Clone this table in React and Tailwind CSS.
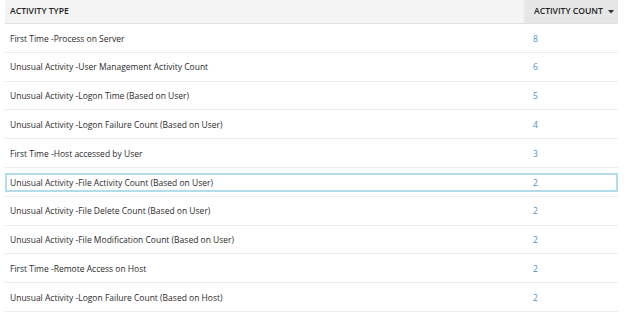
import React from "react";

const rows = [
  ["First Time -Process on Server", 8],
  ["Unusual Activity -User Management Activity Count", 6],
  ["Unusual Activity -Logon Time (Based on User)", 5],
  ["Unusual Activity -Logon Failure Count (Based on User)", 4],
  ["First Time -Host accessed by User", 3],
  ["Unusual Activity -File Activity Count (Based on User)", 2],
  ["Unusual Activity -File Delete Count (Based on User)", 2],
  ["Unusual Activity -File Modification Count (Based on User)", 2],
  ["First Time -Remote Access on Host", 2],
  ["Unusual Activity -Logon Failure Count (Based on Host)", 2],
];

export default function App() {
  return (
    <div
      className="w-[624px] h-[313px] bg-white overflow-hidden pl-[5px] pr-[6px]"
      style={{ fontFamily: '"Open Sans", sans-serif' }}
    >
      <div className="flex h-[24px] bg-[#f4f4f4] border-b border-[#e0e0e0] text-[8.6px] font-semibold text-[#222]">
        <div className="flex-1 flex items-center pl-[5px]">ACTIVITY TYPE</div>
        <div className="w-[94px] bg-[#e6e6e6] flex items-center pl-[10px]">
          <span>ACTIVITY COUNT</span>
          <svg width="6" height="4" viewBox="0 0 6 4" className="ml-[5px]">
            <path d="M0 0 L6 0 L3 3.5 Z" fill="#333" />
          </svg>
        </div>
      </div>
      {rows.map(([name, count], i) => (
        <div
          key={i}
          className="h-[28.8px] pt-[2px] border-b border-[#ececec] flex items-center text-[8.5px] text-[#2b2b2b]"
        >
          <div
            className={
              "flex w-full h-[19px] items-center " +
              (i === 5 ? "outline-2 outline-[#b3dcea] -outline-offset-2" : "")
            }
          >
            <div className="flex-1 pl-[5px]">{name}</div>
            <div className="w-[94px] pl-[9px] text-[#4a8fc9]">{count}</div>
          </div>
        </div>
      ))}
    </div>
  );
}
